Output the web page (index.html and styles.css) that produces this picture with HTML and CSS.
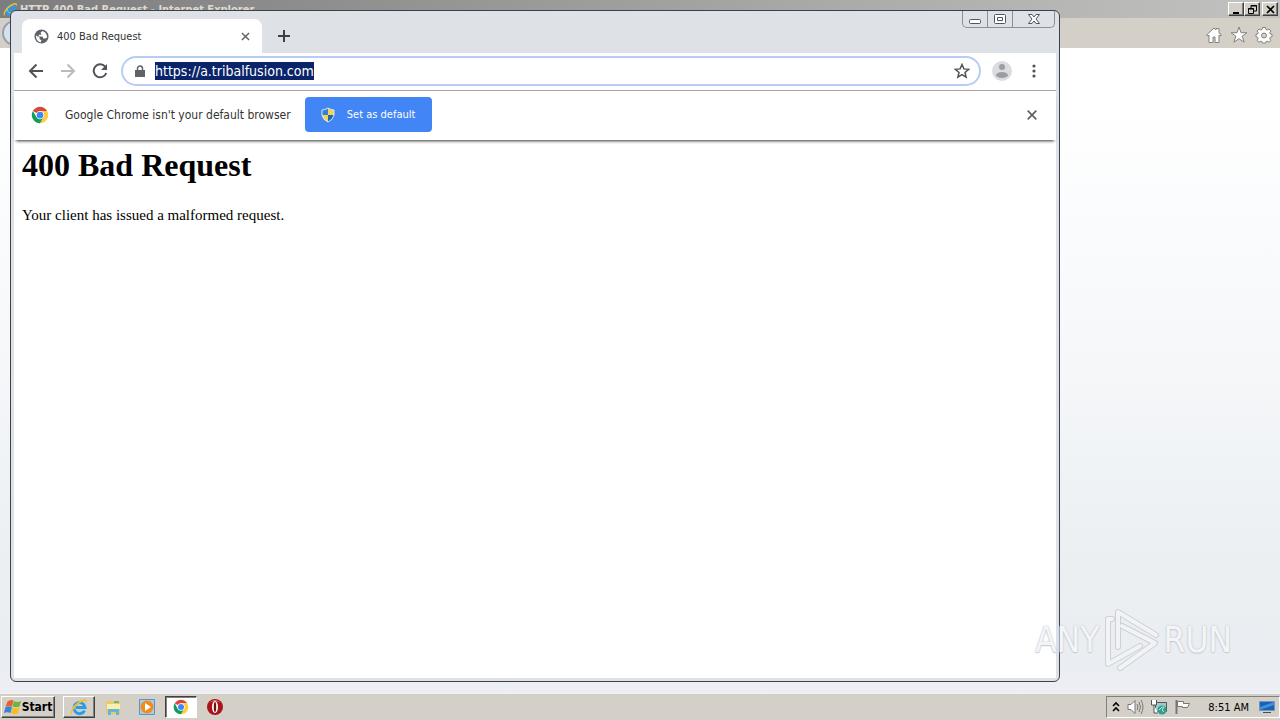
FILE: index.html
```html
<!DOCTYPE html>
<html lang="en">
<head>
<meta charset="utf-8">
<title>400 Bad Request</title>
<link rel="stylesheet" href="styles.css">
</head>
<body>
<svg class="defs" aria-hidden="true">
  <defs>
    <symbol id="chrome" viewBox="0 0 48 48">
      <path d="M24 24 5 13A22 22 0 0 1 43 13H24z" fill="#db4437"/>
      <path d="M43 13A22 22 0 0 1 24 46L33.500 29.500 24 13z" fill="#ffcd40"/>
      <path d="M24 46A22 22 0 0 1 5 13L14.500 29.500 24 34 33.500 29.500z" fill="#0f9d58"/>
      <circle cx="24" cy="24" r="11" fill="#fff"/>
      <circle cx="24" cy="24" r="9" fill="#4285f4"/>
    </symbol>
    <symbol id="ie" viewBox="0 0 20 20">
      <path d="M15.500 13.500A5.500 5.500 0 1 1 16 10.500H6" fill="none" stroke="#2f9be4" stroke-width="3"/>
      <path d="M14.500 13A5.500 5.500 0 0 1 5.500 8.500" fill="none" stroke="#8fd8fa" stroke-width="1"/>
      <path d="M3 18C-1 15 6 5 14 2.500c4-1 4 1 3 4.500 0-3-1-3.500-3-2.500C8 7 2 14 3 18z" fill="#efc12d"/>
    </symbol>
  </defs>
</svg>
<div class="desktop">
  <section class="ie">
    <header class="ie-title">
      <svg class="ie-logo"><use href="#ie"/></svg>
      <span class="ie-name">HTTP 400 Bad Request - Internet Explorer</span>
      <div class="classic-buttons">
        <button class="classic" aria-label="Minimize"><svg viewBox="0 0 13 11"><path d="M3 9h6" stroke="#000" stroke-width="2"/></svg></button>
        <button class="classic" aria-label="Restore"><svg viewBox="0 0 13 11" fill="none" stroke="#000"><path d="M5 4V1.500h5.500V7H8M5 2h6"/><path d="M2.500 4.500h5v5h-5zM2 5h6"/></svg></button>
        <button class="classic classic-close" aria-label="Close"><svg viewBox="0 0 13 11"><path d="m3 2 7 7m0-7-7 7" stroke="#000" stroke-width="1.700"/></svg></button>
      </div>
    </header>
    <div class="ie-bar">
      <span class="ie-back"></span>
      <div class="ie-tools">
        <button class="plain" aria-label="Home"><svg viewBox="0 0 18 18" fill="#fff" stroke="#85827d"><path d="m1.500 9 7.500-7 2 2V2.500h3V7l2.500 2-1.500 1-1-1v7.500h-4V11h-2v5.500h-4V9L3 10z"/></svg></button>
        <button class="plain" aria-label="Favorites"><svg viewBox="0 0 18 18" fill="#fff" stroke="#85827d"><path d="m9 1 2 5.700h6l-4.800 3.500 1.900 6L9 12.700l-5.100 3.500 1.900-6L1 6.700h6z"/></svg></button>
        <button class="plain" aria-label="Tools"><svg viewBox="0 0 18 18" fill="#fff" stroke="#85827d"><path d="m7.500 1.500 3 0 .4 2 1.300.5L14 3l2 2-1.200 1.700.5 1.300 1.700.3v2.500l-1.800.5-.5 1.300L16 14.500 14 16.200l-1.800-1-1.300.5-.4 1.300h-3l-.4-1.300-1.300-.5-1.800 1L2 14.500l1.200-1.900-.5-1.300-1.700-.5V8.300L2.700 8l.5-1.300L2 5l2-2 1.800 1 1.300-.5z"/><circle cx="9" cy="9.500" r="2.500" fill="#d4d0c8"/></svg></button>
      </div>
    </div>
    <div class="ie-page"></div>
  </section>

  <footer class="taskbar">
    <button class="start"><svg viewBox="0 0 18 16"><path d="M3.500 2.500q3-2.500 6-1L8 7.500Q5 6 1.500 7.500z" fill="#e8602c"/><path d="M10 2q3 2 7 0l-1.500 5.500q-3.500 1.500-7 0z" fill="#6fb43f"/><path d="M1.500 8q3-1.500 6.500 0l-1.500 6Q3.500 12.500 0 14z" fill="#3c83d2"/><path d="M8.500 8.500q3.500 1.500 7 0L14 14.500q-3.500 1.500-7 0z" fill="#f5bd2c"/></svg>Start</button>
    <nav class="tasks">
      <button class="task raised" aria-label="Internet Explorer"><svg viewBox="0 0 20 20"><use href="#ie"/></svg></button>
      <button class="task" aria-label="File Explorer"><svg viewBox="0 0 20 20"><path d="M3 4h6l1 2h7v11H3z" fill="#e8cb68"/><path d="M4 7h13v5H4z" fill="#faefb0"/><path d="M5 18v-6h11v6h-3v-3H8v3z" fill="#64b5dc"/><path d="M11 4h5v2h-5z" fill="#7bb661"/></svg></button>
      <button class="task" aria-label="Media Player"><svg viewBox="0 0 20 20"><path d="M2.500 2.500h15v15h-15z" fill="#a9cde9" stroke="#5a93c4"/><circle cx="10" cy="10" r="6.500" fill="#f28a1c"/><path d="m8 6 6 4-6 4z" fill="#fff"/></svg></button>
      <button class="task pressed" aria-label="Google Chrome"><svg viewBox="0 0 20 20"><use href="#chrome" x="2" y="2" width="16" height="16"/></svg></button>
      <button class="task" aria-label="Opera"><svg viewBox="0 0 20 20"><circle cx="10" cy="10" r="8" fill="#a81419"/><path d="M4 6q6-6 12 0-3-2-6-2T4 6" fill="#e77"/><ellipse cx="10" cy="10" rx="3" ry="6" fill="#fff"/><ellipse cx="10" cy="10" rx="1.200" ry="5" fill="#721014"/></svg></button>
    </nav>
    <div class="tray">
      <svg class="chevrons" viewBox="0 0 8 12"><path d="m1 5 3-3 3 3M1 10l3-3 3 3" fill="none" stroke="#000" stroke-width="1.600"/></svg>
      <svg viewBox="0 0 18 18"><path d="M2 6.500h3l4-4v13l-4-4H2z" fill="#fff" stroke="#777"/><path d="M11 6q2 3 0 6m2-8q3 5 0 10m2-12q4 7 0 14" fill="none" stroke="#777"/></svg>
      <svg viewBox="0 0 18 18"><path d="M5.500 4.500h11v9h-11z" fill="#9cc" stroke="#555"/><circle cx="12" cy="12" r="4.500" fill="#349c93"/><path d="M9 12q3-4 5-3l-2 3 2 2" fill="none" stroke="#b7eed1"/><path d="M1.500 2v5h5V2M4 7v8h4" fill="#fff" stroke="#555"/></svg>
      <svg viewBox="0 0 18 18"><path d="M2.500 2v14" stroke="#777" stroke-width="2"/><path d="M3.500 3.500h6v2h6l-2 4h-5v-1h-5z" fill="#fff" stroke="#777"/></svg>
      <time class="clock">8:51 AM</time>
      <svg class="show-desktop" viewBox="0 0 16 14"><path d="M.5 1.500h15v9H.5z" fill="#1762b5" stroke="#7895b5"/><path d="m1 7 14-5v3L1 10z" fill="#3d92dc"/><path d="M4 12.500h8" stroke="#36516e"/></svg>
    </div>
  </footer>

  <section class="chrome">
    <div class="tabstrip">
      <div class="tab">
        <svg class="globe" viewBox="0 0 16 16"><circle cx="8" cy="8" r="7.500" fill="#5f6368"/><path d="M2 7l4 2v2l2 1-1 2.500Q2 13 2 7zM9 2l-2 2 1 2H5v2h4l1 2h2l2-1q0-5-5-7z" fill="#fff"/></svg>
        <span class="tab-name">400 Bad Request</span>
        <button class="plain tab-close" aria-label="Close tab"><svg viewBox="0 0 10 10"><path d="m1 1 8 8m0-8L1 9" stroke="#5f6368" stroke-width="1.600"/></svg></button>
      </div>
      <button class="plain new-tab" aria-label="New tab"><svg viewBox="0 0 12 12"><path d="M6 0v12M0 6h12" stroke="#3c4043" stroke-width="2"/></svg></button>
      <div class="aero-buttons">
        <button class="aero" aria-label="Minimize"><svg viewBox="0 0 14 12"><rect x="1.500" y="6.500" width="11" height="4" rx="1" fill="#fff" stroke="#4f5661"/></svg></button>
        <button class="aero" aria-label="Maximize"><svg viewBox="0 0 14 12"><rect x="1.500" y="1.500" width="11" height="9" rx="1" fill="#fff" stroke="#4f5661"/><path d="M4.500 4.500h5v3h-5z" fill="none" stroke="#4f5661"/></svg></button>
        <button class="aero aero-close" aria-label="Close"><svg viewBox="0 0 14 12"><path d="M1.500 1.500h3.500l2 2.500 2-2.500h3.500L9 6l3.500 4.500H9L7 8l-2 2.500H1.500L5 6z" fill="#fff" stroke="#4f5661"/></svg></button>
      </div>
    </div>
    <div class="toolbar">
      <button class="plain nav" aria-label="Back"><svg viewBox="0 0 16 16"><path d="M15 8H2m6.500-6.500L2 8l6.500 6.500" fill="none" stroke="#505458" stroke-width="2"/></svg></button>
      <button class="plain nav" aria-label="Forward"><svg viewBox="0 0 16 16"><path d="M1 8h13M7.500 1.500 14 8l-6.500 6.500" fill="none" stroke="#b9bbbe" stroke-width="2"/></svg></button>
      <button class="plain nav" aria-label="Reload"><svg viewBox="0 0 16 16"><path d="M13.500 4A6.500 6.500 0 1 0 14.300 10" fill="none" stroke="#505458" stroke-width="2"/><path d="M15 1v6H9z" fill="#505458"/></svg></button>
      <div class="omnibox">
        <svg class="lock" viewBox="0 0 10 12"><path d="M0 5h10v7H0z" fill="#5f6368"/><path d="M2.500 5V3.500a2.500 2.500 0 0 1 5 0V5" fill="none" stroke="#5f6368" stroke-width="1.500"/></svg>
        <a class="url" href="#page">https://a.tribalfusion.com</a>
        <button class="plain bookmark" aria-label="Bookmark this page"><svg viewBox="0 0 16 16"><path d="m8 1.500 1.900 4.400 4.800.4L11 9.500l1.100 4.700L8 11.700l-4.100 2.500L5 9.500 1.300 6.300l4.800-.4z" fill="none" stroke="#505458" stroke-width="1.500"/></svg></button>
      </div>
      <button class="plain profile" aria-label="Profile"><svg viewBox="0 0 20 20"><circle cx="10" cy="10" r="10" fill="#dadcdf"/><circle cx="10" cy="6" r="3" fill="#9a9da1"/><ellipse cx="10" cy="14" rx="6" ry="3" fill="#9a9da1"/></svg></button>
      <button class="plain menu" aria-label="Menu"><svg viewBox="0 0 4 14" fill="#505458"><circle cx="2" cy="2" r="1.600"/><circle cx="2" cy="7" r="1.600"/><circle cx="2" cy="12" r="1.600"/></svg></button>
    </div>
    <div class="infobar">
      <svg class="info-logo"><use href="#chrome"/></svg>
      <span class="info-text">Google Chrome isn't your default browser</span>
      <button class="set-default"><svg viewBox="0 0 14 16"><path d="M7 1Q4 3 1 3v5h6z" fill="#2d83db"/><path d="M7 1q3 2 6 2v5H7z" fill="#f6d443"/><path d="M1 8h6v7Q2 13 1 8z" fill="#f6d443"/><path d="M7 8h6q-1 5-6 7z" fill="#1769c2"/><path d="M7 1q3 2 6 2v5q-1 5-6 7-5-2-6-7V3q3 0 6-2z" fill="none" stroke="#dce8ef"/></svg>Set as default</button>
      <button class="plain info-close" aria-label="Dismiss"><svg viewBox="0 0 10 10"><path d="m.7.7 8.600 8.600m0-8.600L.7 9.300" stroke="#5f6368" stroke-width="1.700"/></svg></button>
    </div>
    <main class="page" id="page">
      <h1>400 Bad Request</h1>
      <p>Your client has issued a malformed request.</p>
    </main>
  </section>

  <div class="watermark">
    <span>ANY</span>
    <svg viewBox="0 0 58 66"><defs><path id="play" d="M9 12H5V57L37 39M15 40V5L53 28M19 19 52 36 17 61" fill="none" stroke-linejoin="round" stroke-linecap="round"/></defs><use href="#play" stroke="#cdd1d6" stroke-width="6"/><use href="#play" stroke="#f1f3f6" stroke-width="4"/></svg>
    <span>RUN</span>
  </div>
</div>
</body>
</html>
```
FILE: styles.css
```css
* { box-sizing: border-box; }
body { margin: 0; font-family: "DejaVu Sans Condensed", "DejaVu Sans", sans-serif; color: #222; }
button { font: inherit; padding: 0; margin: 0; }
svg { display: block; flex: none; }
.defs { position: absolute; width: 0; height: 0; }
.plain { border: 0; background: none; display: grid; place-items: center; flex: none; }

.desktop { position: relative; height: 100vh; display: flex; flex-direction: column; overflow: hidden; }

.ie { flex: 1; display: flex; flex-direction: column; }
.ie-title { height: 18px; display: flex; align-items: center; gap: 1px; padding: 0 2px; background: linear-gradient(90deg, #7d7d7d, #c2c2c0); }
.ie-logo { width: 17px; height: 17px; }
.ie-name { flex: 1; color: #dedad2; font-size: 11px; font-weight: 700; }
.classic-buttons { display: flex; }
.classic { width: 16px; height: 14px; display: grid; place-items: center; background: #d4d0c8; border: 1px solid; border-color: #fff #404040 #404040 #fff; box-shadow: inset -1px -1px #808080; }
.classic svg { width: 13px; height: 11px; }
.classic-close { margin-left: 2px; }
.ie-bar { height: 30px; display: flex; align-items: center; justify-content: space-between; background: #d4cfc7; padding: 0 7px 0 2px; }
.ie-back { width: 26px; height: 26px; border-radius: 50%; border: 2px solid #96a1ac; background: #d5e1ec; }
.ie-tools { display: flex; gap: 7px; padding-top: 4px; }
.ie-tools svg { width: 18px; height: 18px; }
.ie-page { flex: 1; background: linear-gradient(#fff 0, #fff 8%, #fbfcfd 24%, #f5f7f9 50%, #ebeff2 80%, #eaedf1 96%, #edeff5); }

.taskbar { height: 27px; display: flex; align-items: center; gap: 8px; padding: 0 0 0 1px; background: #d4d0c8; border-top: 1px solid #f4f2ee; }
.start, .task { height: 22px; display: flex; align-items: center; justify-content: center; background: #d4d0c8; border: 1px solid transparent; }
.start { width: 54px; font-size: 12px; font-weight: 700; color: #000; }
.start svg { width: 18px; height: 16px; }
.start, .raised { border-color: #fff #404040 #404040 #fff; box-shadow: inset -1px -1px #808080; }
.tasks { flex: 1; display: flex; gap: 2px; }
.task { width: 32px; }
.task svg { width: 20px; height: 20px; }
.pressed { background: #fff; border-color: #404040 #fff #fff #404040; box-shadow: inset 1px 1px #808080; }
.tray { height: 22px; display: flex; align-items: center; gap: 6px; padding: 0 4px 0 5px; border: 1px solid; border-color: #808080 #fff #fff #808080; }
.tray svg { width: 18px; height: 18px; }
.tray .chevrons { width: 8px; height: 12px; }
.tray .show-desktop { width: 16px; height: 14px; }
.clock { font-size: 11px; color: #000; padding: 0 4px 0 10px; }

.chrome { position: absolute; left: 10px; top: 10px; right: 220px; bottom: 38px; display: flex; flex-direction: column; padding: 0 3px 3px; background: #dee1e6; border: 1px solid #3c424b; border-radius: 6px; overflow: hidden; }
.tabstrip { height: 42px; display: flex; align-items: flex-end; padding-left: 8px; }
.tab { width: 240px; height: 34px; display: flex; align-items: center; gap: 8px; padding: 0 12px; border-radius: 8px 8px 0 0; background: #fff; }
.globe { width: 15px; height: 15px; }
.tab-name { flex: 1; font-size: 11px; color: #333; }
.tab-close svg { width: 9px; height: 9px; }
.new-tab { width: 44px; height: 34px; }
.new-tab svg { width: 12px; height: 12px; }
.aero-buttons { margin-left: auto; align-self: flex-start; display: flex; border: 1px solid #8a9099; border-top: 0; border-radius: 0 0 5px 5px; margin-right: 1px; }
.aero { width: 25px; height: 16px; display: grid; place-items: center; background: none; border: 0; border-right: 1px solid #8a9099; }
.aero svg { width: 14px; height: 12px; }
.aero-close { width: 41px; border-right: 0; }

.toolbar { height: 38px; display: flex; align-items: center; background: #fff; border-bottom: 1px solid #aaa7a6; padding: 0 12px 2px 14px; gap: 16px; }
.nav svg { width: 16px; height: 16px; }
.omnibox { flex: 1; height: 30px; display: flex; align-items: center; margin-left: -3px; padding: 0 9px 0 12px; border: 2px solid #b7cdf5; border-radius: 15px; }
.lock { width: 10px; height: 12px; margin-right: 10px; }
.url { font-size: 14px; line-height: 18px; color: #fff; background: #0a246a; text-decoration: none; }
.bookmark { margin-left: auto; }
.bookmark svg { width: 16px; height: 16px; }
.profile { margin-left: -5px; }
.profile svg { width: 20px; height: 20px; }
.menu { width: 20px; margin-left: -4px; }
.menu svg { width: 4px; height: 14px; }

.infobar { position: relative; height: 49px; display: flex; align-items: center; flex: none; background: #fff; padding: 0 19px 2px 17px; box-shadow: 0 3px 3px -2px #333; }
.info-logo { width: 18px; height: 18px; margin-right: 16px; }
.info-text { font-size: 12px; color: #333; }
.set-default { height: 35px; width: 127px; display: flex; align-items: center; justify-content: center; gap: 12px; margin-left: 14px; border: 0; border-radius: 4px; background: #4285f4; color: #fff; font-size: 11px; }
.set-default svg { width: 14px; height: 16px; }
.info-close { margin-left: auto; }
.info-close svg { width: 10px; height: 10px; }

.page { flex: 1; background: #fff; padding: 7px 8px; font-family: "Liberation Serif", serif; color: #000; }
.page h1 { margin: 0; font-size: 32px; line-height: 37px; }
.page p { margin: 21px 0 0; font-size: 15px; line-height: 20px; }

.watermark { position: absolute; right: 48px; bottom: 47px; display: flex; align-items: center; gap: 3px; font-size: 35px; line-height: 40px; color: #f3f5f8; text-shadow: 0 0 2px #b5bac0, 0 1px 1px #cdd1d6; }
.watermark svg { width: 58px; height: 66px; }
```
